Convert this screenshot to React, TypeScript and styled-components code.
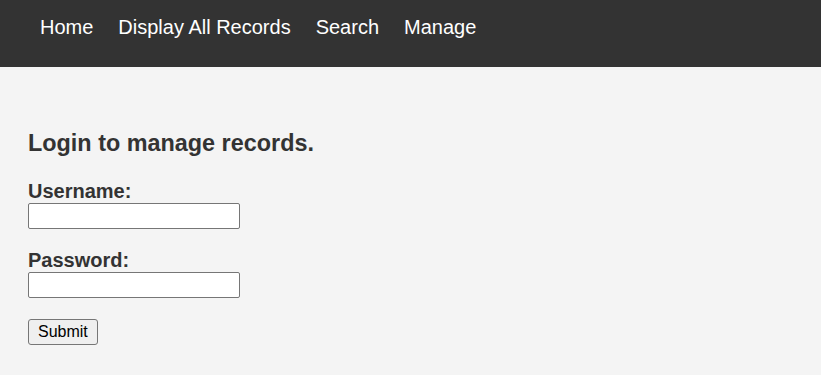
import styled, { createGlobalStyle } from "styled-components";

const GlobalStyle = createGlobalStyle`
     body {
          margin: 0;
          background-color: #f4f4f4;
          font-family: "Liberation Sans", Arial, sans-serif;
          color: #333;
     }
`;

const StyledHeader = styled.header`
     background-color: #333;
     height: 67px;
     box-sizing: border-box;
     padding: 16px 40px 0;
`;

const StyledNav = styled.nav`
     display: flex;
     gap: 25px;
`;

const StyledNavLink = styled.a`
     color: #fff;
     font-size: 20px;
     line-height: 23px;
     text-decoration: none;
     cursor: pointer;
`;

const StyledMain = styled.main`
     padding: 43px 28px 30px;
`;

const StyledTitle = styled.h2`
     font-size: 23.4px;
     margin: 20px 0 22px;
     color: #333;
`;

const StyledField = styled.div`
     margin-bottom: 19px;
`;

const StyledLabel = styled.label`
     display: block;
     font-size: 20px;
     font-weight: bold;
     line-height: 24px;
`;

const StyledInput = styled.input`
     display: block;
     width: 212px;
     height: 26px;
     box-sizing: border-box;
     border: 1px solid #767676;
     border-radius: 2px;
     background: #fff;
     font-size: 16px;
     padding: 1px 3px;
`;

const StyledButton = styled.button`
     margin-top: 2px;
     font-family: "Liberation Sans", Arial, sans-serif;
     font-size: 16px;
     height: 26px;
     padding: 0 9px;
     background-color: #efefef;
     border: 1px solid #767676;
     border-radius: 3px;
     color: #000;
`;

const links = ["Home", "Display All Records", "Search", "Manage"];

export default () => {
     return (
          <>
               <GlobalStyle />
               <StyledHeader>
                    <StyledNav>
                         {links.map((link) => (
                              <StyledNavLink key={link}>{link}</StyledNavLink>
                         ))}
                    </StyledNav>
               </StyledHeader>
               <StyledMain>
                    <StyledTitle>Login to manage records.</StyledTitle>
                    <form onSubmit={(e) => e.preventDefault()}>
                         <StyledField>
                              <StyledLabel htmlFor="username">Username:</StyledLabel>
                              <StyledInput id="username" type="text" />
                         </StyledField>
                         <StyledField>
                              <StyledLabel htmlFor="password">Password:</StyledLabel>
                              <StyledInput id="password" type="password" />
                         </StyledField>
                         <StyledButton type="submit">Submit</StyledButton>
                    </form>
               </StyledMain>
          </>
     );
};
